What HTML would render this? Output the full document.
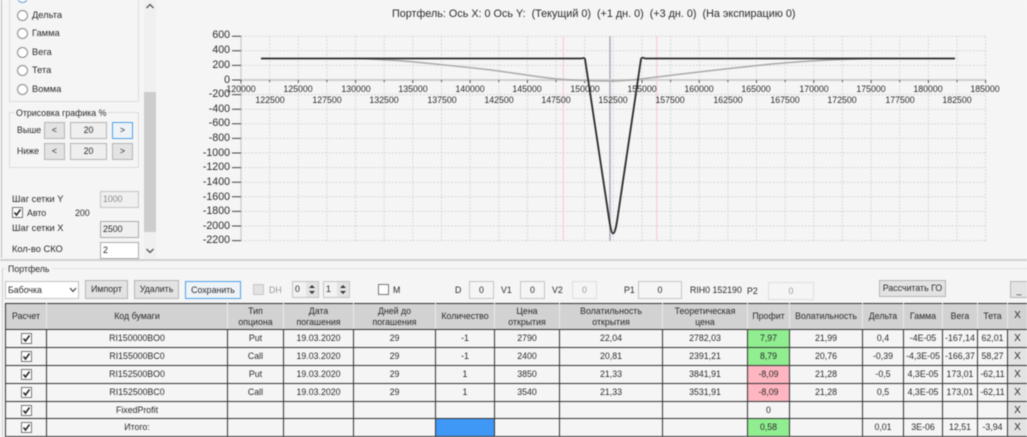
<!DOCTYPE html>
<html><head><meta charset="utf-8">
<style>
html,body{margin:0;padding:0;background:#f5f5f5;}
#w{position:relative;width:1027px;height:437px;overflow:hidden;background:#f5f5f5;font:8.8px "Liberation Sans",sans-serif;color:#2a2a2a;filter:blur(.4px);}
.a{position:absolute;white-space:nowrap;}
.box{position:absolute;box-sizing:border-box;border:1px solid #c4c4c4;text-align:center;white-space:nowrap;}
.btn{position:absolute;box-sizing:border-box;border:1px solid #b4b4b4;background:#e3e3e3;text-align:center;white-space:nowrap;}
.gb{position:absolute;box-sizing:border-box;border:1px solid #dcdcdc;}
.r{position:absolute;left:17px;width:11px;height:11px;box-sizing:border-box;border:1px solid #8a8a8a;border-radius:50%;background:#fff;}
.c{position:absolute;width:11px;height:11px;box-sizing:border-box;border:1px solid #777;background:#fff;}
.l{font-size:9.3px;}
.y{position:absolute;left:190px;width:40px;text-align:right;line-height:10px;font-size:10.6px;}
.x1,.x2{position:absolute;width:40px;text-align:center;line-height:10px;}
.x1{top:84px}.x2{top:95px}
table{position:absolute;left:5px;top:303px;border-collapse:collapse;table-layout:fixed;width:1022px;background:#f5f5f5;}
td{border:1px solid #333;padding:0;text-align:center;height:17px;line-height:11px;overflow:hidden;white-space:nowrap;}
tr.h td{background:#d2d2d2;height:24px;border:1px solid #eaeaea;border-top:1px solid #333;border-bottom:1px solid #333;line-height:10.5px;}
tr.h td:first-child{border-left:1px solid #333;}
tr.s td{height:16px;}
td .k{display:inline-block;width:11px;height:11px;box-sizing:border-box;border:1px solid #777;background:#fff;vertical-align:middle;position:relative;}
.k svg,.c svg{position:absolute;left:0;top:0;}
.g{background:#90ee90;}.p{background:#ffb6c1;}
td.xb{background:#e3e3e3;border:1px solid #f5f5f5;border-top:1px solid #333;border-bottom:1px solid #333;font-size:10px;}
</style></head><body><div id="w">

<!-- left panel -->
<div class="a" style="left:1px;top:0;width:1px;height:258px;background:#bdbdbd"></div>
<div class="gb" style="left:9px;top:-10px;width:130px;height:112px"></div>
<div class="r" style="top:-8px;border-color:#6a9ed8"></div>
<div class="r" style="top:10px"></div><div class="a l" style="left:32px;top:10px">Дельта</div>
<div class="r" style="top:28px"></div><div class="a l" style="left:32px;top:28px">Гамма</div>
<div class="r" style="top:47px"></div><div class="a l" style="left:32px;top:47px">Вега</div>
<div class="r" style="top:65px"></div><div class="a l" style="left:32px;top:65px">Тета</div>
<div class="r" style="top:84px"></div><div class="a l" style="left:32px;top:84px">Вомма</div>

<div class="gb" style="left:9px;top:112px;width:130px;height:56px"></div>
<div class="a" style="left:14px;top:108px;background:#f5f5f5;padding:0 2px">Отрисовка графика %</div>
<div class="a" style="left:17px;top:125px">Выше</div>
<div class="btn" style="left:44px;top:122px;width:21px;height:17px;line-height:15px">&lt;</div>
<div class="btn" style="left:70px;top:122px;width:37px;height:17px;line-height:15px;background:#efefef">20</div>
<div class="btn" style="left:112px;top:122px;width:21px;height:17px;line-height:15px;border-color:#4f9fe8;background:#eef3f8">&gt;</div>
<div class="a" style="left:17px;top:146px">Ниже</div>
<div class="btn" style="left:44px;top:143px;width:21px;height:17px;line-height:15px">&lt;</div>
<div class="btn" style="left:70px;top:143px;width:37px;height:17px;line-height:15px;background:#efefef">20</div>
<div class="btn" style="left:112px;top:143px;width:21px;height:17px;line-height:15px">&gt;</div>

<div class="a l" style="left:12px;top:194px">Шаг сетки Y</div>
<div class="box" style="left:100px;top:191px;width:39px;height:17px;line-height:15px;text-align:left;padding-left:2px;color:#8a8a8a;background:#f0f0f0">1000</div>
<div class="c" style="left:12px;top:207px"><svg width="9" height="9"><path d="M1.5 4.5L3.5 7L7.5 1.5" fill="none" stroke="#222" stroke-width="1.5"/></svg></div>
<div class="a" style="left:27px;top:208px">Авто</div>
<div class="a" style="left:75px;top:208px">200</div>
<div class="a l" style="left:12px;top:223px">Шаг сетки X</div>
<div class="box" style="left:100px;top:221px;width:39px;height:17px;line-height:15px;text-align:left;padding-left:2px;background:#f0f0f0;border-color:#aaa">2500</div>
<div class="a l" style="left:12px;top:244px">Кол-во СКО</div>
<div class="box" style="left:100px;top:242px;width:39px;height:17px;line-height:15px;text-align:left;padding-left:2px;background:#fff;border-color:#aaa">2</div>

<!-- scrollbar -->
<div class="a" style="left:144px;top:0;width:12px;height:258px;background:#f0f0f0"></div>
<div class="a" style="left:144px;top:92px;width:12px;height:140px;background:#cdcdcd"></div>
<svg class="a" style="left:144px;top:0" width="12" height="258"><path d="M2.5 8L6 4.5L9.5 8M2.5 249L6 252.5L9.5 249" fill="none" stroke="#555" stroke-width="1.3"/></svg>

<!-- title -->
<div class="a" style="left:392px;top:8px;font-size:10.8px;white-space:pre;">Портфель: Ось X: 0 Ось Y:  (Текущий 0)  (+1 дн. 0)  (+3 дн. 0)  (На экспирацию 0)</div>

<!-- chart -->
<svg class="a" style="left:0;top:0" width="1027" height="260">
<path d="M241 36.2H985.6M241 50.8H985.6M241 65.4H985.6M241 94.6H985.6M241 109.2H985.6M241 123.8H985.6M241 138.4H985.6M241 153H985.6M241 167.6H985.6M241 182.2H985.6M241 196.8H985.6M241 211.4H985.6M241 226H985.6M241 240.6H985.6" stroke="#d8d8d8" stroke-dasharray="2 1.5" fill="none"/>
<path d="M269.6 36V241M298.3 36V241M326.9 36V241M355.6 36V241M384.2 36V241M412.8 36V241M441.5 36V241M470.1 36V241M498.8 36V241M527.4 36V241M556 36V241M584.7 36V241M613.3 36V241M642 36V241M670.6 36V241M699.2 36V241M727.9 36V241M756.5 36V241M785.2 36V241M813.8 36V241M842.4 36V241M871.1 36V241M899.7 36V241M928.4 36V241M957 36V241M985.6 36V241" stroke="#d8d8d8" stroke-dasharray="2 1.5" fill="none"/>
<path d="M563.3 36V241M656.7 36V241" stroke="#fbcdd4" stroke-width="1.2"/>
<path d="M610 36V241" stroke="#a8aeb8" stroke-width="1.5"/>
<path d="M241 36V241" stroke="#c8c8c8" stroke-width="1.2"/>
<path d="M241 80H985.6" stroke="#cfcfcf" stroke-width="2"/>
<path d="M232 36.2H241M232 50.8H241M232 65.4H241M232 80H241M232 94.6H241M232 109.2H241M232 123.8H241M232 138.4H241M232 153H241M232 167.6H241M232 182.2H241M232 196.8H241M232 211.4H241M232 226H241M232 240.6H241" stroke="#444"/>
<path d="M241 80v3M298.3 80v3M355.6 80v3M412.8 80v3M470.1 80v3M527.4 80v3M584.7 80v3M642 80v3M699.2 80v3M756.5 80v3M813.8 80v3M871.1 80v3M928.4 80v3M985.6 80v3M269.6 80v2M326.9 80v2M384.2 80v2M441.5 80v2M498.8 80v2M556 80v2M613.3 80v2M670.6 80v2M727.9 80v2M785.2 80v2M842.4 80v2M899.7 80v2M957 80v2" stroke="#555"/>
<path d="M345 58.3C380 59 400 60.5 420 62.5C445 65 465 67 487 69.5C515 73 535 76.5 553 78.5C570 80.2 590 81 610 81C625 81 640 79.2 653 77.5C685 73.5 720 69.5 753 66C780 63 800 61.5 820 60.5C845 59.2 870 58.5 890 58.3" fill="none" stroke="#aaa" stroke-width="1.5"/>
<path d="M261 58.5H581C583 58.5 584 57 585 59L607 205C609.5 222 611 233.5 613 233.5C615.5 233.5 617 222 619 208L641 59C642 57 643 57.5 645 58.5H955" fill="none" stroke="#2b2b2b" stroke-width="1.8"/>
</svg>

<div class="y" style="top:30px">600</div><div class="y" style="top:45px">400</div><div class="y" style="top:60px">200</div><div class="y" style="top:75px">0</div>
<div class="y" style="top:89px">-200</div><div class="y" style="top:104px">-400</div><div class="y" style="top:118px">-600</div><div class="y" style="top:133px">-800</div>
<div class="y" style="top:148px">-1000</div><div class="y" style="top:162px">-1200</div><div class="y" style="top:177px">-1400</div><div class="y" style="top:192px">-1600</div><div class="y" style="top:206px">-1800</div><div class="y" style="top:221px">-2000</div><div class="y" style="top:235px">-2200</div>

<div class="x1" style="left:221px">120000</div><div class="x1" style="left:278px">125000</div><div class="x1" style="left:336px">130000</div><div class="x1" style="left:393px">135000</div><div class="x1" style="left:450px">140000</div><div class="x1" style="left:507px">145000</div><div class="x1" style="left:565px">150000</div><div class="x1" style="left:622px">155000</div><div class="x1" style="left:679px">160000</div><div class="x1" style="left:736px">165000</div><div class="x1" style="left:794px">170000</div><div class="x1" style="left:851px">175000</div><div class="x1" style="left:908px">180000</div><div class="x1" style="left:965px">185000</div>
<div class="x2" style="left:250px">122500</div><div class="x2" style="left:307px">127500</div><div class="x2" style="left:364px">132500</div><div class="x2" style="left:422px">137500</div><div class="x2" style="left:479px">142500</div><div class="x2" style="left:536px">147500</div><div class="x2" style="left:593px">152500</div><div class="x2" style="left:650px">157500</div><div class="x2" style="left:708px">162500</div><div class="x2" style="left:765px">167500</div><div class="x2" style="left:822px">172500</div><div class="x2" style="left:880px">177500</div><div class="x2" style="left:937px">182500</div>

<!-- separator -->
<div class="a" style="left:0;top:259px;width:1027px;height:2px;background:#cfcfcf"></div>
<div class="a" style="left:2px;top:268px;width:1025px;height:1px;background:#e2e2e2"></div>
<div class="a" style="left:2px;top:268px;width:1px;height:169px;background:#d0d0d0"></div>
<div class="a" style="left:6px;top:264px;background:#f5f5f5;padding:0 2px">Портфель</div>

<!-- toolbar -->
<div class="box" style="left:5px;top:281px;width:74px;height:18px;line-height:16px;background:#fff;text-align:left;padding-left:2px">Бабочка</div>
<svg class="a" style="left:69px;top:287px" width="8" height="6"><path d="M1 1L4 4.5L7 1" fill="none" stroke="#444" stroke-width="1.2"/></svg>
<div class="btn" style="left:85px;top:280px;width:43px;height:19px;line-height:17px">Импорт</div>
<div class="btn" style="left:134px;top:280px;width:45px;height:19px;line-height:17px">Удалить</div>
<div class="btn" style="left:185px;top:281px;width:56px;height:18px;line-height:16px;border-color:#4f9fe8;background:#eef3f8">Сохранить</div>
<div class="c" style="left:253px;top:284px;background:#e2e2e2;border-color:#c8c8c8"></div>
<div class="a" style="left:269px;top:285px;color:#999">DH</div>
<div class="box" style="left:292px;top:281px;width:27px;height:17px;line-height:15px;text-align:left;padding-left:2px;background:#f2f2f2">0</div>
<div class="a" style="left:306px;top:282px;width:12px;height:15px;background:#e3e3e3"></div>
<svg class="a" style="left:306px;top:282px" width="12" height="15"><path d="M3 6L6 3L9 6ZM3 9L6 12L9 9Z" fill="#333"/></svg>
<div class="box" style="left:323px;top:281px;width:27px;height:17px;line-height:15px;text-align:left;padding-left:2px;background:#f2f2f2">1</div>
<div class="a" style="left:337px;top:282px;width:12px;height:15px;background:#e3e3e3"></div>
<svg class="a" style="left:337px;top:282px" width="12" height="15"><path d="M3 6L6 3L9 6ZM3 9L6 12L9 9Z" fill="#333"/></svg>
<div class="c" style="left:378px;top:284px"></div>
<div class="a" style="left:393px;top:285px">M</div>
<div class="a" style="left:455px;top:285px">D</div>
<div class="box" style="left:469px;top:281px;width:25px;height:18px;line-height:16px">0</div>
<div class="a" style="left:501px;top:285px">V1</div>
<div class="box" style="left:520px;top:281px;width:25px;height:18px;line-height:16px">0</div>
<div class="a" style="left:552px;top:285px">V2</div>
<div class="box" style="left:572px;top:281px;width:25px;height:18px;line-height:16px;color:#999;border-color:#dedede">0</div>
<div class="a" style="left:624px;top:285px">P1</div>
<div class="box" style="left:638px;top:281px;width:44px;height:18px;line-height:16px">0</div>
<div class="a" style="left:690px;top:285px">RIH0 152190</div>
<div class="a" style="left:747px;top:286px">P2</div>
<div class="box" style="left:768px;top:282px;width:46px;height:18px;line-height:16px;color:#999;border-color:#dedede">0</div>
<div class="btn" style="left:879px;top:280px;width:67px;height:17px;line-height:15px">Рассчитать ГО</div>
<div class="btn" style="left:1010px;top:281px;width:18px;height:17px;line-height:17px">_</div>

<!-- grid -->
<table>
<colgroup><col style="width:41px"><col style="width:181px"><col style="width:56px"><col style="width:70px"><col style="width:82px"><col style="width:59px"><col style="width:65px"><col style="width:103px"><col style="width:85px"><col style="width:42px"><col style="width:73px"><col style="width:41px"><col style="width:39px"><col style="width:35px"><col style="width:30px"><col style="width:20px"></colgroup>
<tr class="h"><td style="height:25px">Расчет</td><td>Код бумаги</td><td>Тип<br>опциона</td><td>Дата<br>погашения</td><td>Дней до<br>погашения</td><td>Количество</td><td>Цена<br>открытия</td><td>Волатильность<br>открытия</td><td>Теоретическая<br>цена</td><td>Профит</td><td>Волатильность</td><td>Дельта</td><td>Гамма</td><td>Вега</td><td>Тета</td><td style="font-size:10px">X</td></tr>
<tr><td><span class="k"><svg width="9" height="9"><path d="M1.5 4.5L3.5 7L7.5 1.5" fill="none" stroke="#222" stroke-width="1.5"/></svg></span></td><td>RI150000BO0</td><td>Put</td><td>19.03.2020</td><td>29</td><td>-1</td><td>2790</td><td>22,04</td><td>2782,03</td><td class="g">7,97</td><td>21,99</td><td>0,4</td><td>-4E-05</td><td>-167,14</td><td>62,01</td><td class="xb">X</td></tr>
<tr><td><span class="k"><svg width="9" height="9"><path d="M1.5 4.5L3.5 7L7.5 1.5" fill="none" stroke="#222" stroke-width="1.5"/></svg></span></td><td>RI155000BC0</td><td>Call</td><td>19.03.2020</td><td>29</td><td>-1</td><td>2400</td><td>20,81</td><td>2391,21</td><td class="g">8,79</td><td>20,76</td><td>-0,39</td><td>-4,3E-05</td><td>-166,37</td><td>58,27</td><td class="xb">X</td></tr>
<tr><td><span class="k"><svg width="9" height="9"><path d="M1.5 4.5L3.5 7L7.5 1.5" fill="none" stroke="#222" stroke-width="1.5"/></svg></span></td><td>RI152500BO0</td><td>Put</td><td>19.03.2020</td><td>29</td><td>1</td><td>3850</td><td>21,33</td><td>3841,91</td><td class="p">-8,09</td><td>21,28</td><td>-0,5</td><td>4,3E-05</td><td>173,01</td><td>-62,11</td><td class="xb">X</td></tr>
<tr><td><span class="k"><svg width="9" height="9"><path d="M1.5 4.5L3.5 7L7.5 1.5" fill="none" stroke="#222" stroke-width="1.5"/></svg></span></td><td>RI152500BC0</td><td>Call</td><td>19.03.2020</td><td>29</td><td>1</td><td>3540</td><td>21,33</td><td>3531,91</td><td class="p">-8,09</td><td>21,28</td><td>0,5</td><td>4,3E-05</td><td>173,01</td><td>-62,11</td><td class="xb">X</td></tr>
<tr class="s"><td><span class="k"><svg width="9" height="9"><path d="M1.5 4.5L3.5 7L7.5 1.5" fill="none" stroke="#222" stroke-width="1.5"/></svg></span></td><td>FixedProfit</td><td></td><td></td><td></td><td></td><td></td><td></td><td></td><td>0</td><td></td><td></td><td></td><td></td><td></td><td class="xb">X</td></tr>
<tr><td><span class="k"><svg width="9" height="9"><path d="M1.5 4.5L3.5 7L7.5 1.5" fill="none" stroke="#222" stroke-width="1.5"/></svg></span></td><td>Итого:</td><td></td><td></td><td></td><td style="background:#3f98f5"></td><td></td><td></td><td></td><td class="g">0,58</td><td></td><td>0,01</td><td>3E-06</td><td>12,51</td><td>-3,94</td><td class="xb">X</td></tr>
</table>
</div></body></html>
